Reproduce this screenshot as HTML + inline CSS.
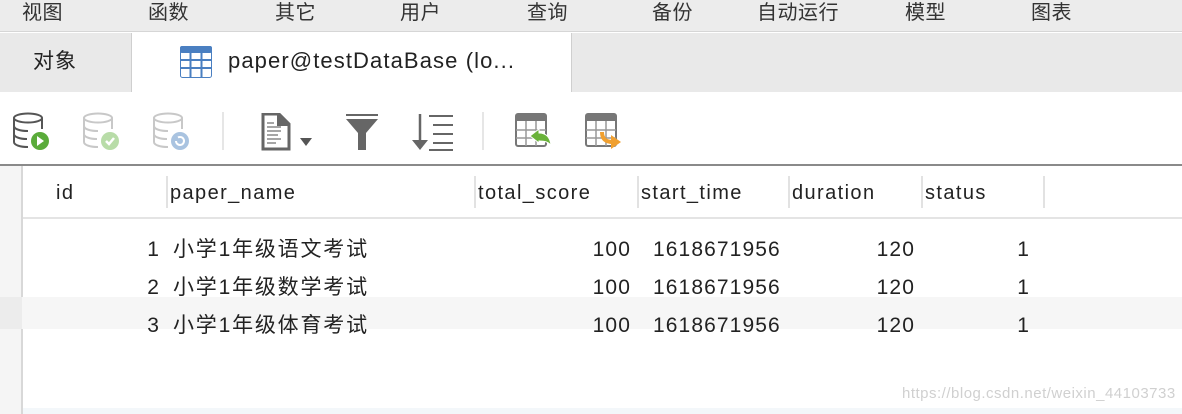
<!DOCTYPE html>
<html><head><meta charset="utf-8"><style>
*{margin:0;padding:0;box-sizing:border-box}
body{width:1182px;height:414px;overflow:hidden;background:#fff;position:relative;font-family:"Liberation Sans","Noto Sans CJK SC",sans-serif;color:#222}
.a{position:absolute;white-space:nowrap}
.m{font-size:20px;color:#333;top:0;line-height:26px;letter-spacing:0.5px}
.h{font-size:20px;top:180px;line-height:26px;color:#222;letter-spacing:1.4px}
.d{font-size:21px;line-height:26px;color:#222;letter-spacing:1.1px}
.c{letter-spacing:1.8px}
.sep{position:absolute;top:176px;width:2px;height:32px;background:#e2e2e2}
</style></head><body>
<div class="a" style="left:0;top:0;width:1182px;height:32px;background:#ececec;border-bottom:1px solid #d6d6d6"></div>
<div class="a m" style="left:22px">视图</div>
<div class="a m" style="left:148px">函数</div>
<div class="a m" style="left:275px">其它</div>
<div class="a m" style="left:400px">用户</div>
<div class="a m" style="left:527px">查询</div>
<div class="a m" style="left:652px">备份</div>
<div class="a m" style="left:757px">自动运行</div>
<div class="a m" style="left:905px">模型</div>
<div class="a m" style="left:1031px">图表</div>

<div class="a" style="left:0;top:33px;width:1182px;height:59px;background:#e9e9e9"></div>
<div class="a" style="left:131px;top:33px;width:441px;height:59px;background:#fff;border-left:1px solid #cfcfcf;border-right:1px solid #cfcfcf"></div>
<div class="a" style="left:33px;top:48px;font-size:21px;line-height:28px;color:#222;letter-spacing:1px">对象</div>
<svg class="a" style="left:180px;top:46px" width="32" height="32" viewBox="0 0 32 32"><rect x="0.5" y="0.5" width="31" height="31" rx="2" fill="#fff" stroke="#4a7fc1"/><rect x="0" y="0" width="32" height="7" rx="2" fill="#4a7fc1"/><path d="M0 14H32M0 22H32M10.5 7V32M21.5 7V32" stroke="#4a7fc1" stroke-width="2"/></svg>
<div class="a" style="left:228px;top:47px;font-size:22px;line-height:28px;color:#222;letter-spacing:1.1px">paper@testDataBase (lo...</div>

<svg class="a" style="left:12px;top:112px" width="40" height="40" viewBox="0 0 40 40" fill="none" stroke="#555" stroke-width="2"><ellipse cx="16" cy="6" rx="14" ry="4.5"/><path d="M2 6V30c0 3 6 5 14 5M30 6V17M2 14c0 3 6 5 14 5M2 22c0 3 6 5 13 5"/><circle cx="28" cy="29" r="9" fill="#5aab3a" stroke="none"/><path d="M25 24l7 5-7 5z" fill="#fff" stroke="none"/></svg>
<svg class="a" style="left:82px;top:112px" width="40" height="40" viewBox="0 0 40 40" fill="none" stroke="#c8c8c8" stroke-width="2"><ellipse cx="16" cy="6" rx="14" ry="4.5"/><path d="M2 6V30c0 3 6 5 14 5M30 6V17M2 14c0 3 6 5 14 5M2 22c0 3 6 5 13 5"/><circle cx="28" cy="29" r="9" fill="#b8dca8" stroke="none"/><path d="M24 29l3 3 5-6" stroke="#fff" stroke-width="2.5"/></svg>
<svg class="a" style="left:152px;top:112px" width="40" height="40" viewBox="0 0 40 40" fill="none" stroke="#c8c8c8" stroke-width="2"><ellipse cx="16" cy="6" rx="14" ry="4.5"/><path d="M2 6V30c0 3 6 5 14 5M30 6V17M2 14c0 3 6 5 14 5M2 22c0 3 6 5 13 5"/><circle cx="28" cy="29" r="9" fill="#a9c3e0" stroke="none"/><path d="M24 29a4 4 0 1 0 2-3.5" stroke="#fff" stroke-width="2"/></svg>
<div class="a" style="left:222px;top:112px;width:2px;height:38px;background:#e6e6e6"></div>
<svg class="a" style="left:261px;top:113px" width="54" height="38" viewBox="0 0 54 38"><path d="M2 1H18L28 11V36H2Z" fill="#fff" stroke="#666" stroke-width="3"/><path d="M17 1V12H28" fill="#666" stroke="#666" stroke-width="2"/><path d="M6 10h7M6 14h14M6 18h14M6 22h11M6 26h14M6 30h9" stroke="#888" stroke-width="1.5"/><path d="M39 25h12l-6 8z" fill="#555"/></svg>
<svg class="a" style="left:345px;top:114px" width="34" height="36" viewBox="0 0 34 36"><path d="M1 1h32" stroke="#666" stroke-width="2"/><path d="M1 5h32L21 19V36h-8V19Z" fill="#666"/></svg>
<svg class="a" style="left:411px;top:114px" width="44" height="38" viewBox="0 0 44 38" stroke="#666" stroke-width="2.5"><path d="M9 0V32"/><path d="M1 26l8 10 8-10z" fill="#666" stroke="none"/><path d="M18 2h24M22 11h20M22 20h20M22 29h20M18 36h24" stroke-width="2"/></svg>
<div class="a" style="left:482px;top:112px;width:2px;height:38px;background:#e6e6e6"></div>
<svg class="a" style="left:515px;top:113px" width="40" height="38" viewBox="0 0 40 38"><rect x="1" y="1" width="30" height="32" rx="2" fill="#fff" stroke="#777" stroke-width="2"/><rect x="1" y="1" width="30" height="7" fill="#777"/><path d="M1 17h30M1 25h30M11 8v25M21 8v25" stroke="#999" stroke-width="1.5"/><path d="M24 30l-9-7 9-7v4c7 0 11 4 12 12-3-3-6-4-12-4z" fill="#6ab23a" stroke="#fff" stroke-width="1"/></svg>
<svg class="a" style="left:585px;top:113px" width="40" height="38" viewBox="0 0 40 38"><rect x="1" y="1" width="30" height="32" rx="2" fill="#fff" stroke="#777" stroke-width="2"/><rect x="1" y="1" width="30" height="7" fill="#777"/><path d="M1 17h30M1 25h30M11 8v25M21 8v25" stroke="#999" stroke-width="1.5"/><path d="M17 19c0 7 4 10 11 10" stroke="#f0a030" stroke-width="4" fill="none"/><path d="M26 22l10 7-10 7z" fill="#f0a030"/></svg>

<div class="a" style="left:0;top:164px;width:1182px;height:2px;background:#8a8a8a"></div>
<div class="a" style="left:0;top:166px;width:22px;height:248px;background:#f5f5f5"></div>
<div class="a" style="left:21px;top:166px;width:2px;height:248px;background:#d8d8d8"></div>
<div class="a" style="left:23px;top:217px;width:1159px;height:2px;background:#e4e4e4"></div>
<div class="a" style="left:0;top:297px;width:1182px;height:32px;background:#f6f6f6"></div>
<div class="a" style="left:0;top:297px;width:22px;height:32px;background:#ececec"></div>
<div class="a" style="left:23px;top:408px;width:1159px;height:6px;background:#f3f7fa"></div>
<div class="sep" style="left:166px"></div><div class="sep" style="left:474px"></div><div class="sep" style="left:637px"></div><div class="sep" style="left:788px"></div><div class="sep" style="left:921px"></div><div class="sep" style="left:1043px"></div>
<div class="a h" style="left:56px">id</div>
<div class="a h" style="left:170px">paper_name</div>
<div class="a h" style="left:478px">total_score</div>
<div class="a h" style="left:641px">start_time</div>
<div class="a h" style="left:792px">duration</div>
<div class="a h" style="left:925px">status</div>

<div class="a d" style="top:237px;right:1022px">1</div>
<div class="a d c" style="top:237px;left:173px">小学1年级语文考试</div>
<div class="a d" style="top:237px;right:551px">100</div>
<div class="a d" style="top:237px;left:653px">1618671956</div>
<div class="a d" style="top:237px;right:267px">120</div>
<div class="a d" style="top:237px;right:152px">1</div>

<div class="a d" style="top:275px;right:1022px">2</div>
<div class="a d c" style="top:275px;left:173px">小学1年级数学考试</div>
<div class="a d" style="top:275px;right:551px">100</div>
<div class="a d" style="top:275px;left:653px">1618671956</div>
<div class="a d" style="top:275px;right:267px">120</div>
<div class="a d" style="top:275px;right:152px">1</div>

<div class="a d" style="top:313px;right:1022px">3</div>
<div class="a d c" style="top:313px;left:173px">小学1年级体育考试</div>
<div class="a d" style="top:313px;right:551px">100</div>
<div class="a d" style="top:313px;left:653px">1618671956</div>
<div class="a d" style="top:313px;right:267px">120</div>
<div class="a d" style="top:313px;right:152px">1</div>

<div class="a" style="left:902px;top:385px;font-size:15px;color:#d0d0d0;letter-spacing:0.5px">https://blog.csdn.net/weixin_44103733</div>
</body></html>
